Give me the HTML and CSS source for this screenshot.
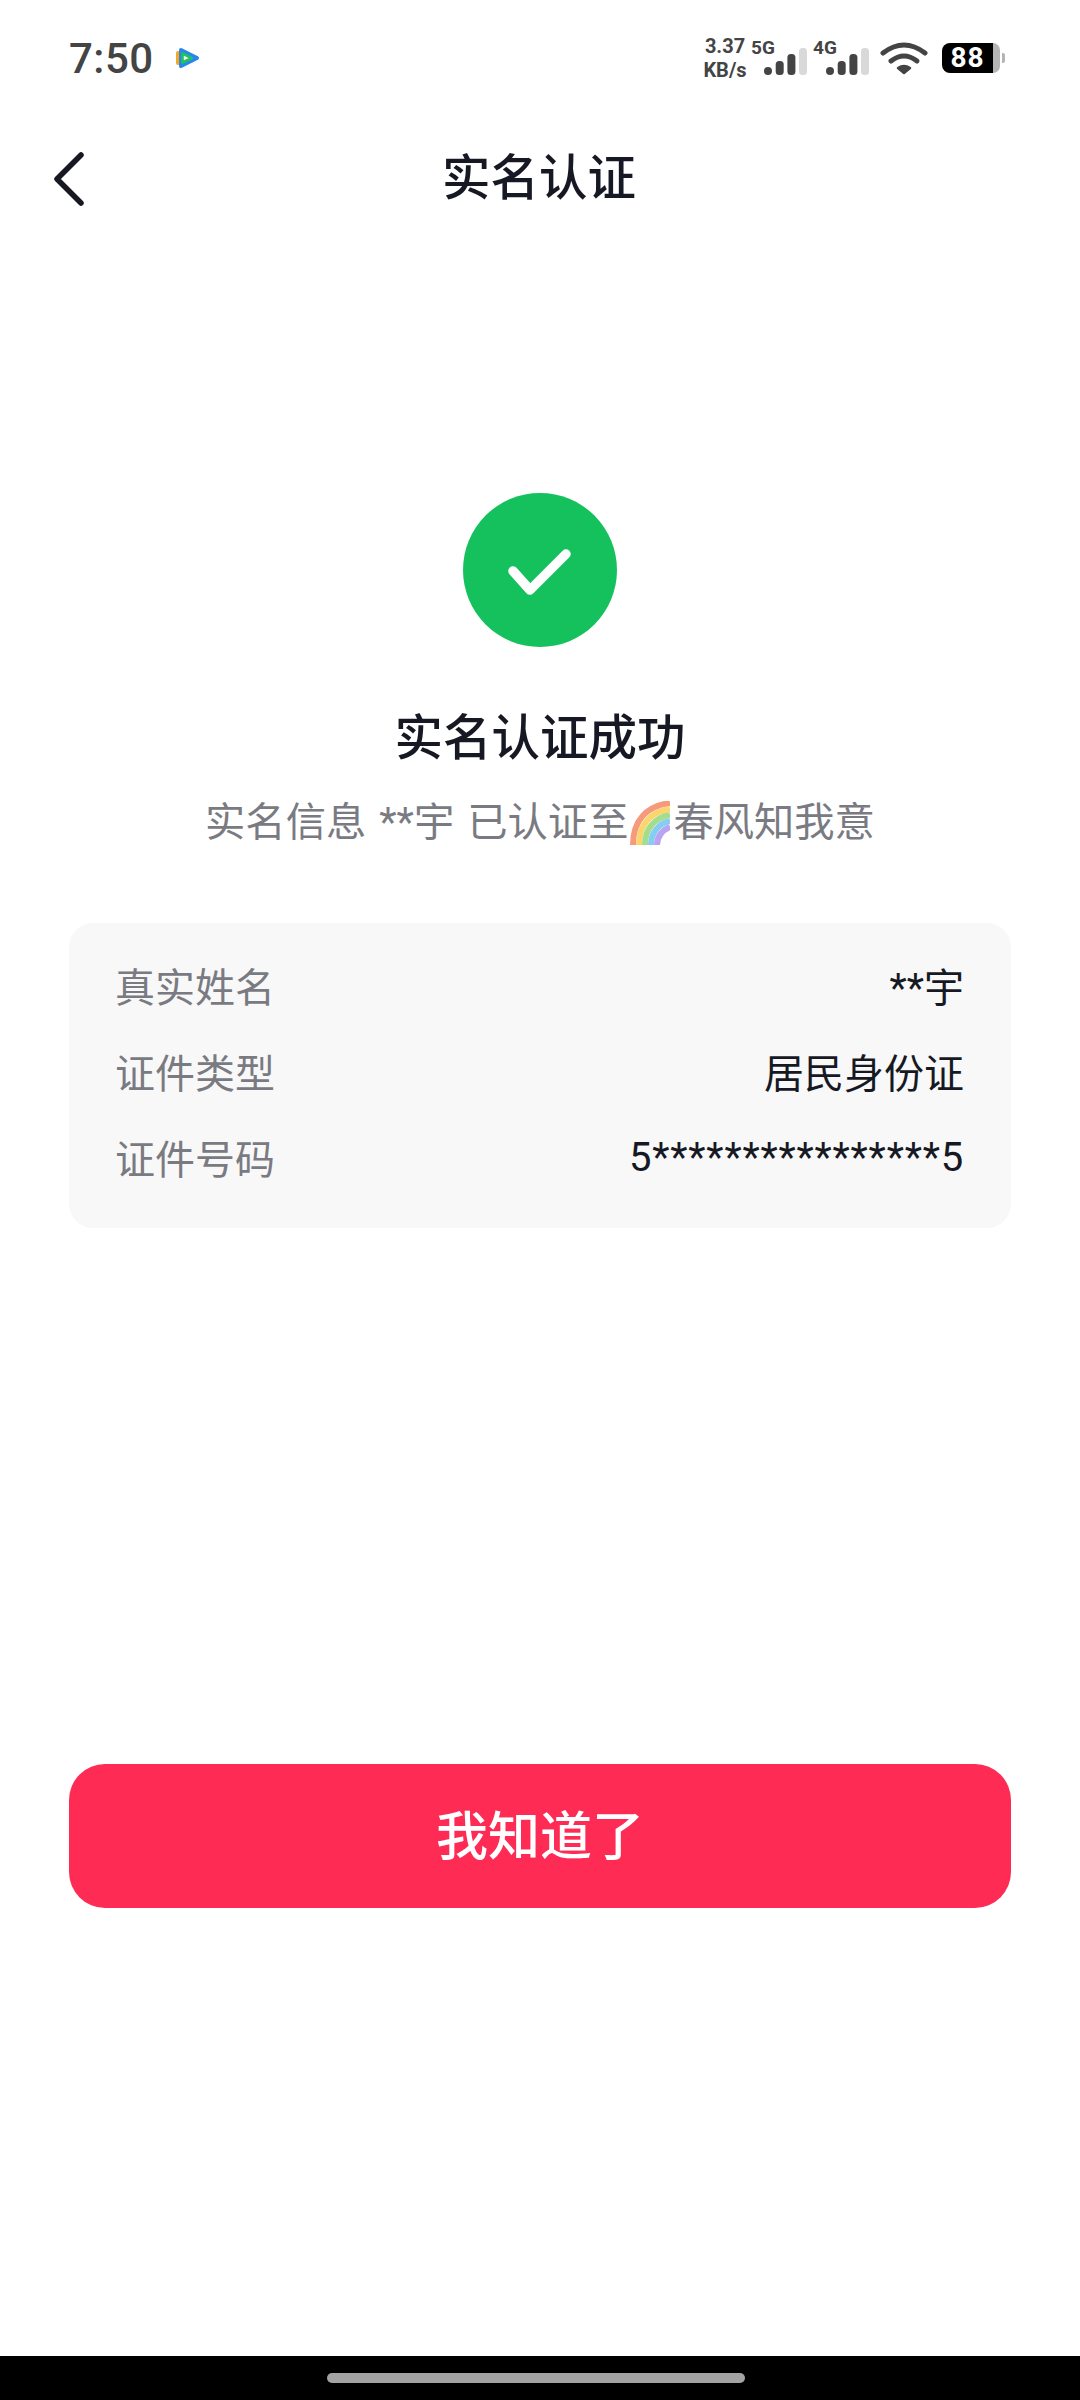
FILE: index.html
```html
<!DOCTYPE html>
<html lang="zh-CN">
<head>
  <meta charset="UTF-8">
  <meta name="viewport" content="width=device-width, initial-scale=1.0">
  <title>实名认证</title>
  <link rel="stylesheet" href="styles.css">
</head>
<body>
  <div class="page">
    <div class="status-bar">
      <div class="status-left">
        <span class="clock">7:50</span>
        <svg class="app-icon" width="24" height="22" viewBox="0 0 24 22">
          <path d="M2 6 V16" stroke="#f5a623" stroke-width="4" stroke-linecap="round" fill="none"/>
          <path d="M5 3 L21 11 L5 19 Z" fill="#fff" stroke="#2a86e8" stroke-width="4" stroke-linejoin="round"/>
          <path d="M6.5 6.5 L15.5 11 L6.5 15.5 Z" fill="#fff" stroke="#1fc45c" stroke-width="2.6" stroke-linejoin="round"/>
        </svg>
      </div>
      <div class="status-right">
        <div class="net-speed"><span>3.37</span><span>KB/s</span></div>
        <div class="signal">
          <span class="signal-label">5G</span>
          <svg width="43" height="27" viewBox="0 0 43 27">
            <rect x="0" y="19" width="8" height="8" rx="4" fill="#444"/>
            <rect x="11.7" y="13" width="8" height="14" rx="3.5" fill="#444"/>
            <rect x="23.4" y="6" width="8" height="21" rx="3.5" fill="#444"/>
            <rect x="35" y="0" width="8" height="27" rx="3.5" fill="#d9d9d9"/>
          </svg>
        </div>
        <div class="signal">
          <span class="signal-label">4G</span>
          <svg width="43" height="27" viewBox="0 0 43 27">
            <rect x="0" y="19" width="8" height="8" rx="4" fill="#444"/>
            <rect x="11.7" y="13" width="8" height="14" rx="3.5" fill="#444"/>
            <rect x="23.4" y="6" width="8" height="21" rx="3.5" fill="#444"/>
            <rect x="35" y="0" width="8" height="27" rx="3.5" fill="#d9d9d9"/>
          </svg>
        </div>
        <svg class="wifi" width="48" height="34" viewBox="0 0 48 34">
          <path d="M3 12 Q24 -4 45 12" fill="none" stroke="#444" stroke-width="5" stroke-linecap="round"/>
          <path d="M11 20 Q24 10 37 20" fill="none" stroke="#444" stroke-width="5" stroke-linecap="round"/>
          <path d="M18 27 Q24 23 30 27 L24 32 Z" fill="#444" stroke="#444" stroke-width="2.5" stroke-linejoin="round"/>
        </svg>
        <div class="battery">
          <div class="battery-body">88</div>
          <div class="battery-rest"></div>
          <div class="battery-nub"></div>
        </div>
      </div>
    </div>

    <div class="nav-bar">
      <svg class="back-icon" width="36" height="58" viewBox="0 0 36 58">
        <path d="M29 6 L5 30 L29 54" fill="none" stroke="#161823" stroke-width="5.5" stroke-linecap="round" stroke-linejoin="round"/>
      </svg>
      <h1 class="nav-title">实名认证</h1>
    </div>

    <div class="content">
      <div class="success-icon">
        <svg width="154" height="154" viewBox="0 0 154 154">
          <circle cx="77" cy="77" r="77" fill="#15c15d"/>
          <path d="M50 78 L67 97 L103 61" fill="none" stroke="#fff" stroke-width="9.5" stroke-linecap="round" stroke-linejoin="round"/>
        </svg>
      </div>
      <h2 class="result-title">实名认证成功</h2>
      <p class="result-desc">
        <span>实名信息 **宇 已认证至</span>
        <svg class="rainbow" width="40" height="44" viewBox="0 0 40 44">
          <path d="M3 44 C3 20 16 5 40 2" fill="none" stroke="#f79a7c" stroke-width="6"/>
          <path d="M9 44 C9 24 20 11 40 8" fill="none" stroke="#fbd66e" stroke-width="6"/>
          <path d="M15 44 C15 28 24 17 40 14" fill="none" stroke="#a5dd8e" stroke-width="6"/>
          <path d="M21 44 C21 32 28 23 40 20" fill="none" stroke="#86cdf2" stroke-width="6"/>
          <path d="M27 44 C27 36 32 29 40 26" fill="none" stroke="#b8a4f0" stroke-width="6"/>
        </svg>
        <span>春风知我意</span>
      </p>

      <div class="info-card">
        <div class="info-row">
          <span class="info-label">真实姓名</span>
          <span class="info-value">**宇</span>
        </div>
        <div class="info-row">
          <span class="info-label">证件类型</span>
          <span class="info-value">居民身份证</span>
        </div>
        <div class="info-row">
          <span class="info-label">证件号码</span>
          <span class="info-value id-number">5****************5</span>
        </div>
      </div>

      <button class="confirm-btn">我知道了</button>
    </div>

    <div class="home-bar">
      <div class="home-pill"></div>
    </div>
  </div>
</body>
</html>
```

FILE: styles.css
```css
html, body {
  margin: 0;
  padding: 0;
  height: 100%;
  background: #fff;
  font-family: Roboto, 'Noto Sans CJK SC', sans-serif;
  color: #161823;
}
.page {
  display: flex;
  flex-direction: column;
  height: 2400px;
  overflow: hidden;
}

/* status bar */
.status-bar {
  display: flex;
  justify-content: space-between;
  align-items: center;
  height: 116px;
  padding: 0 75px 0 69px;
  color: #444;
}
.status-left {
  display: flex;
  align-items: center;
  gap: 22px;
}
.clock {
  font-size: 42px;
  font-weight: 500;
  letter-spacing: 0.5px;
}
.app-icon {
  display: block;
}
.status-right {
  display: flex;
  align-items: center;
}
.net-speed {
  display: flex;
  flex-direction: column;
  align-items: center;
  width: 46px;
  margin-right: 3px;
  font-size: 20px;
  font-weight: 700;
  line-height: 24px;
}
.signal {
  position: relative;
  width: 56px;
  height: 34px;
  margin-right: 6px;
  display: flex;
  justify-content: flex-end;
  align-items: flex-end;
}
.signal svg {
  display: block;
}
.signal-label {
  position: absolute;
  left: 0;
  top: -3px;
  font-size: 19px;
  font-weight: 700;
  line-height: 20px;
}
.wifi {
  display: block;
  margin-left: 5px;
}
.battery {
  display: flex;
  align-items: center;
  margin-left: 14px;
}
.battery-body {
  width: 51px;
  height: 30px;
  background: #000;
  border-radius: 8px 0 0 8px;
  color: #fff;
  font-size: 28px;
  font-weight: 700;
  letter-spacing: 1px;
  line-height: 30px;
  text-align: center;
}
.battery-rest {
  width: 7px;
  height: 30px;
  background: #b5b5b5;
  border-radius: 0 8px 8px 0;
}
.battery-nub {
  width: 3px;
  height: 10px;
  margin-left: 2px;
  background: #b5b5b5;
  border-radius: 0 2px 2px 0;
}

/* nav */
.nav-bar {
  position: relative;
  display: flex;
  justify-content: center;
  align-items: center;
  height: 124px;
}
.back-icon {
  position: absolute;
  left: 52px;
  top: 33px;
}
.nav-title {
  margin: 0;
  padding: 2px 2px 0 0;
  font-size: 48.5px;
  font-weight: 500;
  line-height: 60px;
}

/* main */
.content {
  flex: 1;
  display: flex;
  flex-direction: column;
  align-items: center;
  padding: 253px 69px 0;
}
.success-icon svg {
  display: block;
}
.result-title {
  margin: 62px 0 0;
  font-size: 48.5px;
  font-weight: 500;
  line-height: 60px;
}
.result-desc {
  display: flex;
  align-items: center;
  height: 56px;
  margin: 26px 0 0;
  font-size: 40.3px;
  line-height: 56px;
  word-spacing: 3px;
  color: #7a7b82;
  white-space: pre;
}
.rainbow {
  display: block;
  margin: 0 3px 0 2px;
}
.info-card {
  box-sizing: border-box;
  width: 100%;
  margin-top: 72px;
  padding: 19px 47px 28px 46px;
  background: #f8f8f8;
  border-radius: 24px;
}
.info-row {
  display: flex;
  justify-content: space-between;
  align-items: center;
  height: 86px;
  font-size: 40px;
}
.info-label {
  color: #7a7b82;
}
.info-value {
  color: #161823;
}
.id-number {
  letter-spacing: 0.8px;
}
.confirm-btn {
  width: 100%;
  height: 144px;
  margin-top: 536px;
  padding: 0 0 8px;
  border: none;
  border-radius: 36px;
  background: #fe2c55;
  color: #fff;
  font-family: inherit;
  font-size: 52px;
  font-weight: 500;
}

/* home indicator */
.home-bar {
  display: flex;
  justify-content: center;
  align-items: center;
  height: 44px;
  background: #000;
}
.home-pill {
  width: 418px;
  height: 10px;
  margin-left: -8px;
  background: #a3a3a3;
  border-radius: 5px;
}
```
